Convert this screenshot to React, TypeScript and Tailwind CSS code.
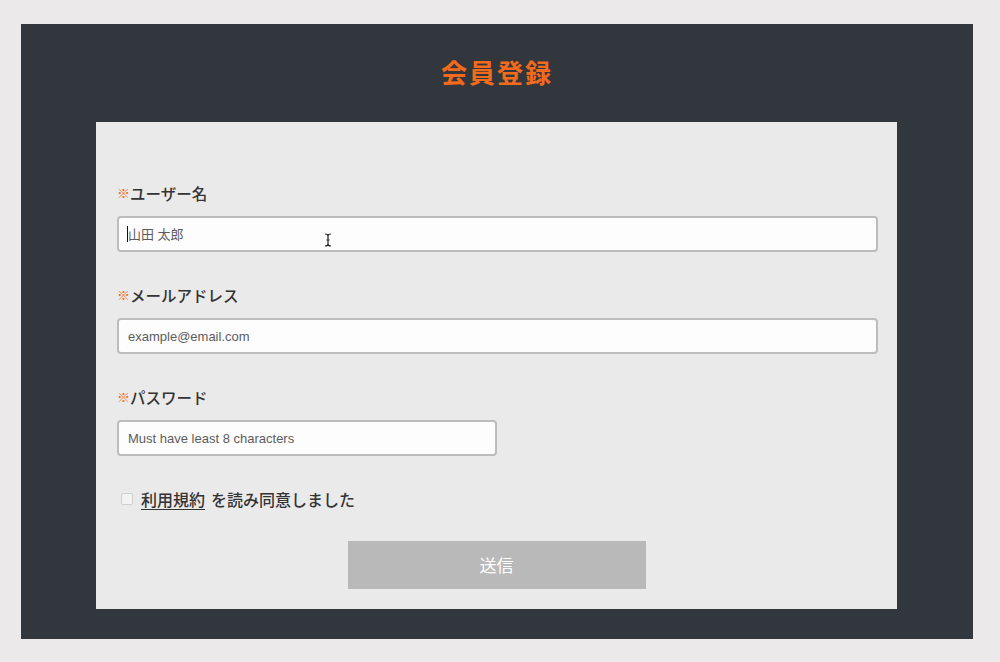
import React from "react";

const jp = { fontFamily: '"Noto Sans CJK JP", "Liberation Sans", sans-serif' };
const inputFont = { fontFamily: '"Liberation Sans", "Noto Sans CJK JP", sans-serif' };

function Field({
  label,
  placeholder,
  wide = true,
  caret = false,
}: {
  label: string;
  placeholder: string;
  wide?: boolean;
  caret?: boolean;
}) {
  return (
    <div className="mb-[33px]">
      <div className="flex items-center h-[20px] text-[15.5px] font-medium text-[#333] leading-[20px]" style={jp}>
        <span className="text-[#f26a1b] text-[13px]">※</span>
        <span>{label}</span>
      </div>
      <div className={`relative mt-[13px] ${wide ? "w-[761px]" : "w-[380px]"}`}>
        <input
          type="text"
          placeholder={placeholder}
          className="block w-full h-[36px] rounded-[4px] border-2 border-[#bcbcbc] bg-[#fdfdfd] px-[9px] text-[13px] text-[#333] placeholder:text-[#5c5c5c] outline-none"
          style={inputFont}
        />
        {caret && (
          <div className="absolute left-[10px] top-[10px] h-[16px] w-px bg-[#111]" />
        )}
        {caret && (
          <svg
            className="absolute left-[207px] top-[17px]"
            width="8"
            height="14"
            viewBox="0 0 8 14"
          >
            <path
              d="M1 1 Q4 1 4 3 L4 11 Q4 13 1 13 M7 1 Q4 1 4 3 M4 11 Q4 13 7 13 M2.5 7 H5.5"
              fill="none"
              stroke="#222"
              strokeWidth="1.2"
            />
          </svg>
        )}
      </div>
    </div>
  );
}

export default function App() {
  return (
    <div className="min-h-[662px] w-full bg-[#ebe9ea] pt-[24px] pb-[23px] pl-[21px]">
      <div className="w-[952px] bg-[#32363d] pb-[30px]">
        <h1
          className="pt-[33px] h-[98px] text-center text-[26px] leading-[30px] font-bold text-[#f26a1b] tracking-[2px]"
          style={jp}
        >
          会員登録
        </h1>
        <div className="ml-[75px] w-[801px] bg-[#ebeaeb] pt-[61px] pb-[20px] pl-[21px]">
          <Field label="ユーザー名" placeholder="山田 太郎" caret />
          <Field label="メールアドレス" placeholder="example@email.com" />
          <Field label="パスワード" placeholder="Must have least 8 characters" wide={false} />
          <div className="flex items-center h-[20px] pl-[4px] text-[16px] font-medium text-[#333]" style={jp}>
            <span className="inline-block w-[12px] h-[12px] rounded-[2px] border border-[#cfcfcf] bg-[#f3f3f3]" />
            <span className="ml-[8px] underline underline-offset-[3px]">利用規約</span>
            <span className="ml-[6px]">を読み同意しました</span>
          </div>
          <div className="mt-[32px] flex justify-center pr-[21px]">
            <button
              className="w-[298px] h-[48px] bg-[#b9b9b9] text-white text-[17px]"
              style={jp}
            >
              送信
            </button>
          </div>
        </div>
      </div>
    </div>
  );
}
